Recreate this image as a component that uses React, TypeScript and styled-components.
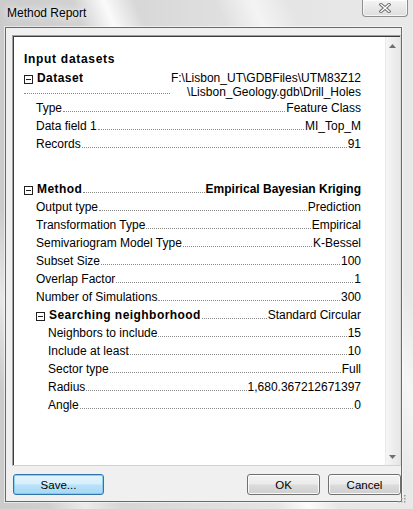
import React from 'react';
import styled, { createGlobalStyle } from 'styled-components';

const GlobalStyle = createGlobalStyle`
  html, body { margin: 0; padding: 0; background: #e2e2e2; }
  body { font-family: "Liberation Sans", Arial, sans-serif; }
`;

const Window = styled.div`
  width: 413px;
  height: 509px;
  display: flex;
  flex-direction: column;
  overflow: hidden;
  background:
    linear-gradient(68deg, rgba(255,255,255,0) 45%, rgba(255,255,255,0.9) 50%, rgba(255,255,255,0) 55%),
    linear-gradient(68deg, rgba(255,255,255,0) 68%, rgba(255,255,255,0.6) 74%, rgba(255,255,255,0) 80%),
    linear-gradient(68deg, rgba(255,255,255,0) 8%, rgba(255,255,255,0.55) 14%, rgba(255,255,255,0) 20%),
    linear-gradient(90deg, #cbcbcb 0%, #d6d6d6 30%, #e4e4e4 65%, #e9e9e9 100%);
`;

const TitleBar = styled.div`
  height: 27px;
  flex: none;
  display: flex;
  align-items: flex-start;
  justify-content: space-between;
`;

const Title = styled.div`
  font-size: 12px;
  line-height: 14px;
  color: #000;
  padding: 6px 0 0 7px;
  text-shadow: 0 0 6px rgba(255,255,255,0.95), 0 0 12px rgba(255,255,255,0.8);
`;

const CloseButton = styled.div`
  width: 46px;
  height: 17px;
  box-sizing: border-box;
  margin-right: 5px;
  border: 1px solid #8e8e8e;
  border-top: none;
  border-radius: 0 0 4px 4px;
  background: linear-gradient(#f4f4f4, #e6e6e6 60%, #dedede);
  box-shadow: inset 0 0 0 1px rgba(255,255,255,0.7);
  display: flex;
  align-items: center;
  justify-content: center;
`;

const ClientArea = styled.div`
  flex: 1;
  min-height: 0;
  margin: 0 11px 7px 5px;
  background: #f0f0f0;
  border: 1px solid #6a6a6a;
  box-shadow: 0 0 0 1px rgba(255,255,255,0.55);
  display: flex;
  flex-direction: column;
  padding: 7px 0 6px 6px;
  position: relative;
`;

const ReportBox = styled.div`
  flex: 1;
  min-height: 0;
  display: flex;
  background: #fff;
  border-style: solid;
  border-width: 1px;
  border-color: #a0a0a0 #dcdcdc #d2d2d2 #a0a0a0;
  box-shadow: inset 1px 1px 0 #3c3c3c;
`;

const ReportContent = styled.div`
  flex: 1;
  min-width: 0;
  padding: 14px 24px 0 11px;
  font-size: 12px;
  color: #000;
`;

const Scrollbar = styled.div`
  width: 15px;
  flex: none;
  margin-top: 1px;
  display: flex;
  flex-direction: column;
  justify-content: space-between;
  background: linear-gradient(90deg, #dedede 0, #f6f6f6 1px, #eeeeee 50%, #e7e7e7 100%);
`;

const ArrowButton = styled.div`
  height: 17px;
  display: flex;
  align-items: center;
  justify-content: center;
`;

const Heading = styled.div`
  font-weight: 700;
  letter-spacing: 0.7px;
  line-height: 18px;
  height: 18px;
`;

const Row = styled.div<{ $indent: number }>`
  display: flex;
  align-items: flex-end;
  height: 18px;
  line-height: 18px;
  padding-left: ${p => p.$indent}px;
  white-space: nowrap;
`;

const Label = styled.span<{ $bold?: boolean }>`
  display: flex;
  align-items: flex-start;
  font-weight: ${p => (p.$bold ? 700 : 400)};
  letter-spacing: ${p => (p.$bold ? '0.45px' : '0')};
`;

const Value = styled.span<{ $bold?: boolean }>`
  font-weight: ${p => (p.$bold ? 700 : 400)};
  text-align: right;
`;

const Leader = styled.span`
  flex: 1;
  min-width: 3px;
  border-bottom: 1px dotted #8a8a8a;
  margin: 0 1px 5px;
`;

const Toggle = styled.span<{ $top: number }>`
  width: 9px;
  height: 9px;
  box-sizing: border-box;
  flex: none;
  border: 1px solid #202020;
  margin: ${p => p.$top}px 4px 0 0;
  display: flex;
  align-items: center;
  justify-content: center;
  &::after {
    content: '';
    width: 5px;
    height: 1px;
    background: #202020;
  }
`;

const MultiRow = styled.div`
  display: flex;
  align-items: flex-start;
  line-height: 14px;
  margin-top: 3px;
  white-space: nowrap;
`;

const LabelStack = styled.div`
  flex: 1;
  min-width: 0;
  display: flex;
  flex-direction: column;
`;

const StackLeader = styled.span`
  border-bottom: 1px dotted #8a8a8a;
  margin: 8px 1px 0 0;
`;

const Section = styled.div<{ $gap: number }>`
  margin-top: ${p => p.$gap}px;
`;

const ButtonRow = styled.div`
  flex: none;
  display: flex;
  gap: 8px;
  margin-top: 8px;
  padding-left: 1px;
`;

const Spacer = styled.div`
  flex: 1;
`;

const Button = styled.button<{ $width: number; $primary?: boolean }>`
  width: ${p => p.$width}px;
  height: 21px;
  box-sizing: border-box;
  padding: 0;
  border-radius: 3px;
  font-family: "Liberation Sans", Arial, sans-serif;
  font-size: 11.5px;
  color: #000;
  border: 1px solid ${p => (p.$primary ? '#2f74ad' : '#707070')};
  background: ${p =>
    p.$primary
      ? 'linear-gradient(#e3f4fc 0%, #d6effc 48%, #b9e2f8 52%, #a6d8f4 100%)'
      : 'linear-gradient(#f3f3f3 0%, #ebebeb 48%, #dcdcdc 52%, #cfcfcf 100%)'};
  box-shadow: inset 0 0 0 1px ${p => (p.$primary ? 'rgba(120,200,240,0.8)' : 'rgba(255,255,255,0.85)')};
`;

const Grip = styled.svg`
  position: absolute;
  right: -5px;
  bottom: -2px;
  width: 9px;
  height: 9px;
`;

type Item = { label: string; value: string };

const datasetItems: Item[] = [
  { label: 'Type', value: 'Feature Class' },
  { label: 'Data field 1', value: 'MI_Top_M' },
  { label: 'Records', value: '91' },
];

const methodItems: Item[] = [
  { label: 'Output type', value: 'Prediction' },
  { label: 'Transformation Type', value: 'Empirical' },
  { label: 'Semivariogram Model Type', value: 'K-Bessel' },
  { label: 'Subset Size', value: '100' },
  { label: 'Overlap Factor', value: '1' },
  { label: 'Number of Simulations', value: '300' },
];

const neighborhoodItems: Item[] = [
  { label: 'Neighbors to include', value: '15' },
  { label: 'Include at least', value: '10' },
  { label: 'Sector type', value: 'Full' },
  { label: 'Radius', value: '1,680.367212671397' },
  { label: 'Angle', value: '0' },
];

const ItemRow = ({ item, indent }: { item: Item; indent: number }) => (
  <Row $indent={indent}>
    <Label>{item.label}</Label>
    <Leader />
    <Value>{item.value}</Value>
  </Row>
);

const HeaderRow = ({ label, value, indent, boldValue }: { label: string; value: string; indent: number; boldValue?: boolean }) => (
  <Row $indent={indent}>
    <Label $bold>
      <Toggle $top={6} />
      {label}
    </Label>
    <Leader />
    <Value $bold={boldValue}>{value}</Value>
  </Row>
);

const Arrow = ({ up }: { up?: boolean }) => (
  <svg width="7" height="4" viewBox="0 0 7 4">
    <path d={up ? 'M0 4 L3.5 0 L7 4 Z' : 'M0 0 L3.5 4 L7 0 Z'} fill="#707070" />
  </svg>
);

export default function App() {
  return (
    <>
      <GlobalStyle />
      <Window>
        <TitleBar>
          <Title>Method Report</Title>
          <CloseButton>
            <svg width="12" height="10" viewBox="0 0 12 10">
              <path d="M2 1.5 L10 8.5 M10 1.5 L2 8.5" stroke="#6b6b6b" strokeWidth="3.2" strokeLinecap="square" />
              <path d="M2 1.5 L10 8.5 M10 1.5 L2 8.5" stroke="#ffffff" strokeWidth="1.4" strokeLinecap="square" />
            </svg>
          </CloseButton>
        </TitleBar>
        <ClientArea>
          <ReportBox>
            <ReportContent>
              <Heading>Input datasets</Heading>
              <MultiRow>
                <LabelStack>
                  <Label $bold>
                    <Toggle $top={4} />
                    Dataset
                  </Label>
                  <StackLeader />
                </LabelStack>
                <Value>
                  F:\Lisbon_UT\GDBFiles\UTM83Z12
                  <br />
                  \Lisbon_Geology.gdb\Drill_Holes
                </Value>
              </MultiRow>
              {datasetItems.map(it => (
                <ItemRow key={it.label} item={it} indent={12} />
              ))}
              <Section $gap={27}>
                <HeaderRow label="Method" value="Empirical Bayesian Kriging" indent={0} boldValue />
                {methodItems.map(it => (
                  <ItemRow key={it.label} item={it} indent={12} />
                ))}
                <HeaderRow label="Searching neighborhood" value="Standard Circular" indent={12} />
                {neighborhoodItems.map(it => (
                  <ItemRow key={it.label} item={it} indent={24} />
                ))}
              </Section>
            </ReportContent>
            <Scrollbar>
              <ArrowButton>
                <Arrow up />
              </ArrowButton>
              <ArrowButton>
                <Arrow />
              </ArrowButton>
            </Scrollbar>
          </ReportBox>
          <ButtonRow>
            <Button $width={91} $primary>Save...</Button>
            <Spacer />
            <Button $width={73}>OK</Button>
            <Button $width={73}>Cancel</Button>
          </ButtonRow>
          <Grip viewBox="0 0 9 9">
            <rect x="7" y="1" width="1.5" height="1.5" fill="#9a9a9a" />
            <rect x="4" y="4" width="1.5" height="1.5" fill="#9a9a9a" />
            <rect x="7" y="4" width="1.5" height="1.5" fill="#9a9a9a" />
            <rect x="1" y="7" width="1.5" height="1.5" fill="#9a9a9a" />
            <rect x="4" y="7" width="1.5" height="1.5" fill="#9a9a9a" />
            <rect x="7" y="7" width="1.5" height="1.5" fill="#9a9a9a" />
          </Grip>
        </ClientArea>
      </Window>
    </>
  );
}
